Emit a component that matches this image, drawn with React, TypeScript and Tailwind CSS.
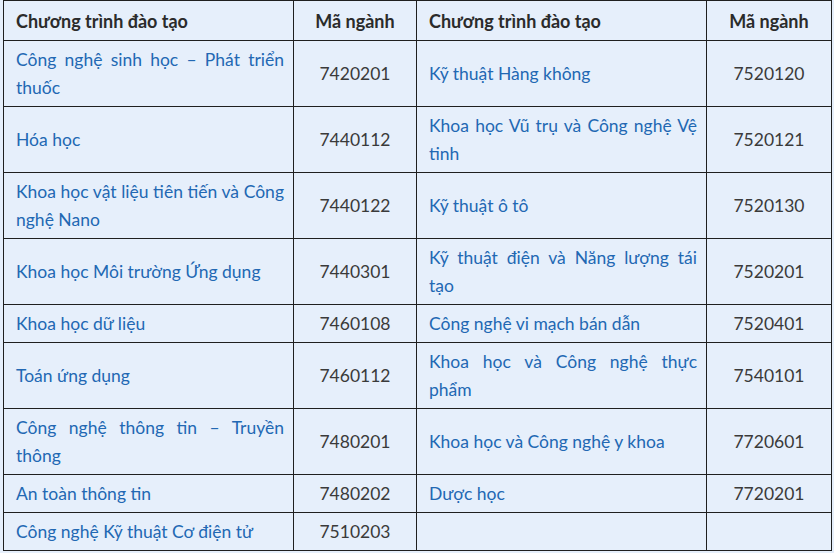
const rows: [string, string, string, string][] = [
  ["Công nghệ sinh học – Phát triển thuốc", "7420201", "Kỹ thuật Hàng không", "7520120"],
  ["Hóa học", "7440112", "Khoa học Vũ trụ và Công nghệ Vệ tinh", "7520121"],
  ["Khoa học vật liệu tiên tiến và Công nghệ Nano", "7440122", "Kỹ thuật ô tô", "7520130"],
  ["Khoa học Môi trường Ứng dụng", "7440301", "Kỹ thuật điện và Năng lượng tái tạo", "7520201"],
  ["Khoa học dữ liệu", "7460108", "Công nghệ vi mạch bán dẫn", "7520401"],
  ["Toán ứng dụng", "7460112", "Khoa học và Công nghệ thực phẩm", "7540101"],
  ["Công nghệ thông tin – Truyền thông", "7480201", "Khoa học và Công nghệ y khoa", "7720601"],
  ["An toàn thông tin", "7480202", "Dược học", "7720201"],
  ["Công nghệ Kỹ thuật Cơ điện tử", "7510203", "", ""],
];

export default function App() {
  return (
    <div className="h-[553px] w-[834px] overflow-hidden bg-[#e6effb] pl-[3px] font-['Lato','Noto_Sans',sans-serif] text-[17.5px] leading-[28px]">
      <table className="w-[828px] table-fixed border-collapse">
        <colgroup>
          <col className="w-[290px]" />
          <col className="w-[123px]" />
          <col className="w-[290px]" />
          <col className="w-[125px]" />
        </colgroup>
        <thead>
          <tr className="text-[18px] text-[#2b2b2b]">
            <th className="border border-[#1f1f1f] py-[5.5px] pl-3 pr-[9px] text-left font-bold">Chương trình đào tạo</th>
            <th className="border border-[#1f1f1f] px-3 py-[5.5px] text-center font-bold">Mã ngành</th>
            <th className="border border-[#1f1f1f] py-[5.5px] pl-3 pr-[9px] text-left font-bold">Chương trình đào tạo</th>
            <th className="border border-[#1f1f1f] px-3 py-[5.5px] text-center font-bold">Mã ngành</th>
          </tr>
        </thead>
        <tbody>
          {rows.map(([a, ma, b, mb]) => (
            <tr key={ma}>
              <td className="border border-[#1f1f1f] py-[4.5px] pl-3 pr-[9px] text-justify align-middle text-[#2268b3]">{a}</td>
              <td className="border border-[#1f1f1f] px-3 py-[4.5px] text-center align-middle text-[#3a3a3a]">{ma}</td>
              <td className="border border-[#1f1f1f] py-[4.5px] pl-3 pr-[9px] text-justify align-middle text-[#2268b3]">{b}</td>
              <td className="border border-[#1f1f1f] px-3 py-[4.5px] text-center align-middle text-[#3a3a3a]">{mb}</td>
            </tr>
          ))}
        </tbody>
      </table>
    </div>
  );
}
